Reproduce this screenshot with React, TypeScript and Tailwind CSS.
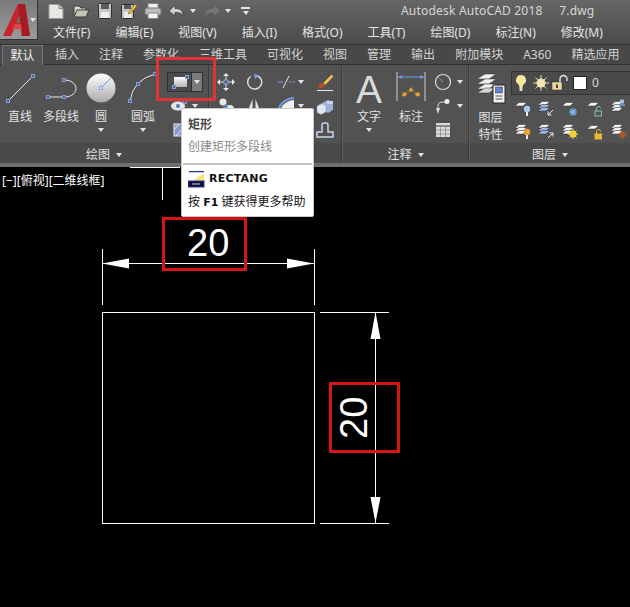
import type { ReactNode } from "react";

const Caret = ({ className = "" }: { className?: string }) => (
  <span className={`inline-block w-0 h-0 border-x-[3.5px] border-x-transparent border-t-[4px] border-t-[#e4e4e4] ${className}`} />
);

const Grip = ({ x, y }: { x: number; y: number }) => (
  <rect x={x - 1.5} y={y - 1.5} width="3" height="3" fill="#59606e" stroke="#7d9fe6" strokeWidth="1" />
);

const Ico = ({ w = 18, h = 18, children }: { w?: number; h?: number; children: ReactNode }) => (
  <svg width={w} height={h} viewBox={`0 0 ${w} ${h}`} className="block shrink-0">
    {children}
  </svg>
);

// ---- quick access icons
const QNew = () => (
  <Ico>
    <path d="M2 2.500h10l4 4v10H2z" fill="#e8e8e2" stroke="#999" />
    <path d="M12 2.500v4h4" fill="#bbb" stroke="#888" />
  </Ico>
);
const QOpen = () => (
  <Ico>
    <path d="M2 14V4h5l2 2h5v2" fill="#d8d4c4" stroke="#3c3c3c" />
    <path d="M2 15l3-7h12l-3 7z" fill="#c4c4b8" stroke="#3c3c3c" />
  </Ico>
);
const QSave = () => (
  <Ico>
    <rect x="2.500" y="1.500" width="13" height="15" rx="1" fill="#c6c6c6" stroke="#2e2e2e" />
    <rect x="5" y="2" width="8" height="5" fill="#5b5b5b" />
    <rect x="5" y="10" width="8" height="6" fill="#eee" />
  </Ico>
);
const QSaveAs = () => (
  <Ico>
    <rect x="1.500" y="2.500" width="12" height="14" rx="1" fill="#c6c6c6" stroke="#2e2e2e" />
    <rect x="4" y="3" width="7" height="4" fill="#5b5b5b" />
    <rect x="4" y="10" width="7" height="6" fill="#eee" />
    <path d="M9 10l6-8 2 2-6 7-3 1z" fill="#f0c040" stroke="#8a6a20" strokeWidth=".7" />
  </Ico>
);
const QPrint = () => (
  <Ico>
    <rect x="4" y="1.500" width="10" height="5" fill="#eee" stroke="#888" />
    <rect x="1" y="6" width="16" height="7" rx="2" fill="#bdbdbd" stroke="#777" />
    <rect x="4" y="11" width="10" height="5.500" fill="#f2f2f2" stroke="#888" />
  </Ico>
);
const QUndo = () => (
  <Ico w={16}>
    <path d="M1 9l6-6v3.500c4 0 8 1 8 7.500-1.500-3-4-3.500-8-3.500V14z" fill="#cfcfcf" stroke="#333" strokeWidth=".7" />
  </Ico>
);
const QRedo = () => (
  <Ico w={16}>
    <path d="M15 9l-6-6v3.500c-4 0-8 1-8 7.500 1.500-3 4-3.500 8-3.500V14z" fill="#777" stroke="#666" strokeWidth=".7" />
  </Ico>
);
const QMenu = () => (
  <span className="flex flex-col items-center gap-[2px]">
    <span className="w-[9px] h-[2px] bg-[#e4e4e4]" />
    <Caret />
  </span>
);

// ---- big tools in the draw panel
const LineIcon = () => (
  <Ico w={40} h={36}>
    <path d="M8 29L33 4" stroke="#e8e8e8" strokeWidth="1" />
    <Grip x={8} y={29} />
    <Grip x={33} y={4} />
  </Ico>
);
const PolylineIcon = () => (
  <Ico w={42} h={36}>
    <path d="M8 25H24C40 25 40 8 24 8" fill="none" stroke="#e8e8e8" strokeWidth="1" />
    <Grip x={8} y={25} />
    <Grip x={24} y={25} />
    <Grip x={24} y={8} />
  </Ico>
);
const CircleIcon = () => (
  <Ico w={38} h={36}>
    <defs>
      <linearGradient id="circ" x1="0" y1="0" x2="0" y2="1">
        <stop offset="0" stopColor="#ffffff" />
        <stop offset="1" stopColor="#a9a9a9" />
      </linearGradient>
    </defs>
    <circle cx="19" cy="16" r="14.500" fill="url(#circ)" />
    <path d="M19 16L29 6" stroke="#6f98e8" strokeWidth="1" />
    <rect x="17.500" y="14.500" width="3" height="3" fill="#e4e8f0" stroke="#7d9fe6" />
  </Ico>
);
const ArcIcon = () => (
  <Ico w={46} h={36}>
    <path d="M10 29Q13 8 35 2" fill="none" stroke="#e8e8e8" strokeWidth="1" />
    <Grip x={10} y={29} />
    <Grip x={18} y={12} />
    <Grip x={35} y={2} />
  </Ico>
);

const BigTool = ({ w, label, caret, children }: { w: string; label: string; caret?: boolean; children: ReactNode }) => (
  <div className={`flex flex-col items-center ${w}`}>
    <div className="h-[37px] flex justify-center">{children}</div>
    <span className="text-[12px] leading-[16px] text-[#e2e2e2] whitespace-nowrap">{label}</span>
    {caret && <Caret className="mt-[3px]" />}
  </div>
);

const Panel = ({ w, title, children }: { w: string; title?: string; children: ReactNode }) => (
  <div className={`${w} h-full flex flex-col border-r border-r-[#3b3b3b] border-l border-l-[#5e5e5e] first:border-l-0 last:border-r-0`}>
    <div className="h-[78px] flex overflow-hidden">{children}</div>
    <div className="h-[20px] pt-[3px] bg-[#4a4a4a] flex items-center justify-center gap-[6px] text-[12px] text-[#e2e2e2]">
      {title && (
        <>
          <span>{title}</span>
          <Caret />
        </>
      )}
    </div>
  </div>
);

// ---- small tools
const RectSplit = () => (
  <div className="flex h-[20px] w-[36px] border border-[#303030] bg-[#4c4c4c] mt-[2px]">
    <div className="w-[24px] flex items-center justify-center border-r border-r-[#303030]">
      <Ico w={18} h={14}>
        <defs>
          <linearGradient id="rectg" x1="0" y1="0" x2="0" y2="1">
            <stop offset="0" stopColor="#fbfbfb" />
            <stop offset="1" stopColor="#b4b4b4" />
          </linearGradient>
        </defs>
        <rect x="3" y="2" width="13" height="10" fill="url(#rectg)" />
        <Grip x={3} y={12} />
        <Grip x={16} y={2} />
      </Ico>
    </div>
    <div className="flex-1 bg-[#7a7a7a] flex items-center justify-center">
      <Caret />
    </div>
  </div>
);
const EllipseIcon = () => (
  <Ico w={16} h={12}>
    <ellipse cx="7" cy="6" rx="7" ry="4.500" fill="#e6e6e6" />
    <Grip x={7} y={6} />
    <Grip x={14} y={2} />
  </Ico>
);
const HatchIcon = () => (
  <Ico w={14} h={16}>
    <rect x="2" y="2" width="9" height="12" fill="#8b9ad0" stroke="#e8e8e8" />
    <path d="M2 8l5-6M4 14l7-8" stroke="#dfe4f5" />
  </Ico>
);
const MoveIcon = () => (
  <Ico>
    <path d="M9 0l3 3H6zM9 18l3-3H6zM0 9l3-3v6zM18 9l-3-3v6z" fill="#e8e8e8" />
    <path d="M3 9h12M9 3v12" stroke="#e8e8e8" />
    <rect x="7" y="7" width="4" height="4" fill="#59606e" stroke="#7d9fe6" />
  </Ico>
);
const RotateIcon = () => (
  <Ico>
    <path d="M5.500 3.500A7 7 0 1 0 12 2.500" fill="none" stroke="#dcdcdc" strokeWidth="1.500" />
    <path d="M9 .5l5 2.500-4 3z" fill="#7d9fe6" />
  </Ico>
);
const TrimIcon = () => (
  <Ico>
    <path d="M1 9h5M12 9h2M15.500 9h2" stroke="#7d9fe6" />
    <path d="M6 15L12 3" stroke="#e4e4e4" />
  </Ico>
);
const BrushIcon = () => (
  <Ico>
    <path d="M7 10L15.500 1.500l2 2L9.500 12z" fill="#f0c45a" stroke="#6a5020" strokeWidth=".5" />
    <path d="M2 14.500c1-3.500 3-5 5-4.500l2.500 2c-1 2.500-4 3.500-7.500 2.500z" fill="#b5532a" />
    <path d="M1 17.500h16" stroke="#e8e8e8" />
  </Ico>
);
const CopyIcon = () => (
  <Ico>
    <circle cx="6" cy="5" r="3.500" fill="#e8e8e8" />
    <circle cx="13" cy="12" r="4" fill="#e8e8e8" />
    <rect x="7" y="8" width="3" height="3" fill="#59606e" stroke="#7d9fe6" />
  </Ico>
);
const MirrorIcon = () => (
  <Ico>
    <path d="M7.500 2v14H2zM10.500 2v14H16z" fill="#e6e6e6" />
  </Ico>
);
const FilletIcon = () => (
  <Ico>
    <path d="M3 17C3 9 8 4 17 3v14z" fill="#f2f2f2" />
    <path d="M1 17C1 8 7 2 17 1" fill="none" stroke="#6f98e8" strokeWidth="2" />
  </Ico>
);
const ArrayIcon = () => (
  <Ico>
    <path d="M6 6l6-3 5 2v8l-5 3-6-3z" fill="#9cb3d8" />
    <path d="M1 9l5-2.500 4 2V15l-5 2.500-4-2z" fill="#dfe6f2" stroke="#7f93b8" strokeWidth=".5" />
    <path d="M11 4h6v3h-6z" fill="#c8d4ea" />
  </Ico>
);
const StretchIcon = () => (
  <Ico>
    <path d="M1 16v-5h5V4q0-2 2-2h2q2 0 2 2v7h5v5z" fill="none" stroke="#c6d6f0" strokeWidth="1.500" />
  </Ico>
);

// ---- annotation
const DimIcon = () => (
  <Ico w={30} h={30}>
    <path d="M1 0v29M29 0v29" stroke="#cfcfcf" />
    <path d="M2 5h26" stroke="#6f98e8" />
    <path d="M2 5l4-2v4zM28 5l-4-2v4z" fill="#6f98e8" />
    <path d="M15 15l2.500 3.500-2.500 1.500-2.500-1.500zM7 20l4 1-1 3.500-4-.5zM23 20l-4 1 1 3.500 4-.5z" fill="#d9a032" />
    <path d="M11 18l2 2-1.500 1zM19 18l-2 2 1.500 1z" fill="#a8661e" />
  </Ico>
);
const CircleSmall = () => (
  <Ico>
    <circle cx="9" cy="9" r="7.500" fill="none" stroke="#dcdcdc" strokeWidth="1.200" />
    <path d="M9 9L4 4" stroke="#6f98e8" />
  </Ico>
);
const LeaderIcon = () => (
  <Ico>
    <path d="M4 12V8q1-3 4-3h4" fill="none" stroke="#dcdcdc" />
    <path d="M4 17L2 11h4z" fill="#dcdcdc" />
    <circle cx="13" cy="4.500" r="2.500" fill="#efefef" />
  </Ico>
);
const TableIcon = () => (
  <Ico>
    <rect x="2" y="2" width="14" height="14" fill="#dcdcdc" />
    <path d="M2 5h14" stroke="#8a8a8a" strokeWidth="2" />
    <path d="M2 9h14M2 13h14M6.500 5v11M11.500 5v11" stroke="#8a8a8a" strokeWidth=".8" />
  </Ico>
);

// ---- layers
const LayerProps = () => (
  <Ico w={30} h={32}>
    <path d="M1 7l8-5h11l-7 5z" fill="#f2f2f2" stroke="#333" strokeWidth=".5" />
    <path d="M1 12l8-5h11l-7 5z" fill="#f2f2f2" stroke="#333" strokeWidth=".5" />
    <path d="M1 17l8-5h11l-7 5z" fill="#f2f2f2" stroke="#333" strokeWidth=".5" />
    <path d="M1 21l8-5h11l-7 5z" fill="#d4d4d4" stroke="#333" strokeWidth=".5" />
    <rect x="17" y="13" width="12" height="18" fill="#f4f4f4" stroke="#222" />
    <rect x="19.500" y="15" width="7" height="6" fill="#5f86c8" stroke="#333" strokeWidth=".5" />
    <path d="M19.500 24h7M19.500 27h7" stroke="#444" />
  </Ico>
);

const Sheet = ({ n, blue }: { n: number; blue?: boolean }) => (
  <>
    {Array.from({ length: n }).map((_, i) => (
      <path
        key={i}
        d={`M1 ${6 + i * 3}l4-3.500h8l-4 3.500z`}
        fill={blue && i > 0 ? "#9db8e4" : "#f4f4f4"}
        stroke="#2c2c2c"
        strokeWidth=".5"
      />
    ))}
  </>
);

type Acc = "bulbBlue" | "bulb" | "arrowDown" | "arrowUp" | "snow" | "sun" | "lockG" | "lockY" | "person" | "brush";

const Accessory = ({ k }: { k: Acc }) => {
  if (k === "bulbBlue" || k === "bulb")
    return (
      <>
        <circle cx="13" cy="10" r="3.200" fill={k === "bulb" ? "#f2a030" : "#a9c8f0"} />
        <rect x="12" y="13" width="2" height="4" fill="#eee" />
      </>
    );
  if (k === "arrowDown") return <path d="M16 11l-5 5M11 12.500V16h3.500" fill="none" stroke="#eee" />;
  if (k === "arrowUp") return <path d="M11 16l5-5M12.500 11H16v3.500" fill="none" stroke="#eee" />;
  if (k === "snow")
    return <path d="M8 13h8M12 9v8M9 10l6 6M15 10l-6 6" stroke="#7fb0f0" strokeWidth="1.300" />;
  if (k === "sun")
    return (
      <>
        <path d="M7 12h10M12 7v10M8.500 8.500l7 7M15.500 8.500l-7 7" stroke="#f6e070" />
        <circle cx="12" cy="12" r="3.500" fill="#f6d030" />
      </>
    );
  if (k === "lockG" || k === "lockY") {
    const c = k === "lockG" ? "#86c4a8" : "#e8b838";
    return (
      <>
        <path d="M10.500 12v-2.500a2 2 0 0 1 4 0" fill="none" stroke={c} />
        <rect x="9" y="12" width="6.500" height="5" fill={k === "lockG" ? "none" : c} stroke={c} />
      </>
    );
  }
  if (k === "person")
    return (
      <>
        <circle cx="12" cy="2.500" r="2.300" fill="#a9c0e8" />
        <path d="M9 5h6v2H9z" fill="#6f8fc8" />
      </>
    );
  return <path d="M9 12l3-3 5 3-3 4-4 0z" fill="#a85a20" />;
};

const LayerTool = ({ n, blue, a }: { n: number; blue?: boolean; a: Acc }) => (
  <div className="flex justify-center">
    <Ico>
      <g transform={n === 1 ? "translate(0 1)" : "translate(0 0)"}>
        <Sheet n={n} blue={blue} />
      </g>
      <Accessory k={a} />
    </Ico>
  </div>
);

const Bulb = () => (
  <Ico w={12} h={18}>
    <path d="M6 1a5 5 0 0 0-3 9c1 1 1.500 2 1.500 4h3c0-2 .5-3 1.500-4a5 5 0 0 0-3-9z" fill="#f6e8a0" />
    <rect x="4.500" y="14" width="3" height="3" fill="#d8d8d8" />
  </Ico>
);
const SunIcon = () => (
  <Ico>
    <path d="M1 9h16M9 1v16M3.500 3.500l11 11M14.500 3.500l-11 11" stroke="#e8dca8" />
    <circle cx="9" cy="9" r="4.500" fill="#f2e6b0" />
  </Ico>
);
const LockOpen = () => (
  <Ico w={20}>
    <rect x="2" y="8" width="10" height="8" fill="#ecd898" stroke="#333" strokeWidth=".5" />
    <rect x="6" y="10.500" width="2" height="3.500" fill="#444" />
    <path d="M10 8V5a3.500 3.500 0 0 1 7 0v2" fill="none" stroke="#e8e8e8" strokeWidth="1.300" />
  </Ico>
);

const AutoCadLogo = () => (
  <svg width="30" height="34" viewBox="0 0 30 34" className="block">
    <path d="M1 33L16 1h7l5 32h-8l-1-7h-7l-3 7z" fill="#c9232b" />
    <path d="M14 20h5l-1-9z" fill="#6b6b6b" />
    <path d="M16 1h7l5 32h-8L16 1z" fill="#a51c24" />
    <path d="M10 26l3-5h6l.8 5z" fill="#e04048" />
  </svg>
);

const RectangIcon = () => (
  <svg width="17" height="17" viewBox="0 0 17 17" className="block">
    <path d="M1 .5h15" stroke="#2030a0" strokeWidth="1.500" />
    <path d="M16 2v9H3z" fill="#f4e878" />
    <rect x="0" y="10" width="16" height="6" fill="#101020" stroke="#2030c0" />
    <path d="M4 13h8" stroke="#d8d8d8" />
  </svg>
);

const MENU = ["文件(F)", "编辑(E)", "视图(V)", "插入(I)", "格式(O)", "工具(T)", "绘图(D)", "标注(N)", "修改(M)"];
const TABS = ["插入", "注释", "参数化", "三维工具", "可视化", "视图", "管理", "输出", "附加模块", "A360", "精选应用"];

export default function App() {
  return (
    <div className="relative w-[630px] h-[607px] overflow-hidden bg-black font-['Noto_Sans','Noto_Sans_CJK_SC',sans-serif] flex flex-col">
      {/* title + menu */}
      <header className="h-[45px] shrink-0 flex bg-gradient-to-b from-[#666666] to-[#4b4b4b] border-b border-b-[#2f2f2f]">
        <div className="w-[38px] h-[40px] flex items-center pl-[2px] gap-[1px] bg-gradient-to-b from-[#7b7b7b] to-[#9a9a9a] border-r border-b border-[#333333]">
          <AutoCadLogo />
          <Caret className="border-t-[#333333] -ml-[3px]" />
        </div>
        <div className="flex-1 flex flex-col">
          <div className="h-[24px] flex items-center text-[#d6d6d6]">
            <div className="ml-[9px] w-[25px]"><QNew /></div>
            <div className="w-[24px]"><QOpen /></div>
            <div className="w-[24px]"><QSave /></div>
            <div className="w-[24px]"><QSaveAs /></div>
            <div className="w-[24px]"><QPrint /></div>
            <div className="w-[21px]"><QUndo /></div>
            <Caret className="ml-[1px] mr-[9px]" />
            <div className="w-[20px]"><QRedo /></div>
            <Caret className="border-t-[#9a9a9a] mr-[10px]" />
            <QMenu />
            <span className="ml-[151px] text-[12px] tracking-[.2px] whitespace-pre">Autodesk AutoCAD 2018     7.dwg</span>
          </div>
          <nav className="flex gap-[25px] pl-[15px] text-[12px] leading-[22px] text-[#e4e4e4] whitespace-nowrap">
            {MENU.map((m) => (
              <span key={m}>{m}</span>
            ))}
          </nav>
        </div>
      </header>

      {/* tabs */}
      <div className="h-[20px] shrink-0 flex items-end bg-[#484848] border-b border-b-[#2f2f2f] text-[12px] text-[#d2d2d2] whitespace-nowrap">
        <span className="ml-[2px] w-[41px] h-[20px] pt-[1px] -mb-[1px] flex items-center justify-center bg-[#535353] border border-[#787878] border-b-0 text-[#f0f0f0]">默认</span>
        <div className="flex gap-[20px] pl-[12px] pt-[1px] h-full items-center">
          {TABS.map((t) => (
            <span key={t}>{t}</span>
          ))}
        </div>
      </div>

      {/* ribbon */}
      <div className="h-[98px] shrink-0 flex bg-[#525252]">
        <Panel w="w-[209px]" title="绘图">
          <div className="flex pt-[7px]">
            <BigTool w="w-[40px]" label="直线"><LineIcon /></BigTool>
            <BigTool w="w-[42px]" label="多段线"><PolylineIcon /></BigTool>
            <BigTool w="w-[38px]" label="圆" caret><CircleIcon /></BigTool>
            <BigTool w="w-[46px]" label="圆弧" caret><ArcIcon /></BigTool>
          </div>
          <div className="flex flex-col pt-[5px] pl-[1px]">
            <div className="h-[24px]"><RectSplit /></div>
            <div className="h-[24px] flex items-center gap-[5px] pl-[4px]"><EllipseIcon /><Caret /></div>
            <div className="h-[24px] flex items-center pl-[5px]"><HatchIcon /></div>
          </div>
        </Panel>
        <Panel w="w-[133px]">
          <div className="grid grid-cols-[26px_30px_40px_32px] grid-rows-[24px_24px_24px] items-center justify-items-center pl-[3px] pt-[5px]">
            <MoveIcon />
            <RotateIcon />
            <div className="flex items-center gap-[3px] justify-self-start pl-[8px]"><TrimIcon /><Caret /></div>
            <BrushIcon />
            <CopyIcon />
            <MirrorIcon />
            <div className="flex items-center gap-[3px] justify-self-start pl-[8px]"><FilletIcon /><Caret /></div>
            <ArrayIcon />
            <span />
            <span />
            <span />
            <StretchIcon />
          </div>
        </Panel>
        <Panel w="w-[127px]" title="注释">
          <div className="flex pt-[7px]">
            <div className="w-[52px] flex flex-col items-center">
              <div className="h-[37px] flex items-start justify-center text-[39px] leading-[35px] font-['Liberation_Sans',sans-serif] text-[#dadada]">A</div>
              <span className="text-[12px] leading-[16px] text-[#e2e2e2]">文字</span>
              <Caret className="mt-[3px]" />
            </div>
            <BigTool w="w-[32px]" label="标注"><DimIcon /></BigTool>
          </div>
          <div className="grid grid-cols-[18px_12px] grid-rows-[24px_24px_24px] items-center justify-items-center pl-[7px] pt-[5px] gap-x-[2px]">
            <CircleSmall />
            <Caret />
            <LeaderIcon />
            <Caret />
            <TableIcon />
          </div>
        </Panel>
        <Panel w="w-[161px]" title="图层">
          <div className="w-[41px] flex flex-col items-center pt-[7px]">
            <div className="h-[37px]"><LayerProps /></div>
            <span className="text-[12px] leading-[17px] text-[#e2e2e2]">图层</span>
            <span className="text-[12px] leading-[17px] text-[#e2e2e2]">特性</span>
          </div>
          <div className="flex-1 flex flex-col pt-[6px]">
            <div className="h-[24px] flex items-center pl-[3px] bg-[#4a4a4a] border border-[#333333] border-r-0">
              <Bulb />
              <span className="ml-[5px]"><SunIcon /></span>
              <LockOpen />
              <span className="ml-[3px] w-[14px] h-[14px] bg-white border border-[#222222]" />
              <span className="ml-[5px] text-[12px] text-[#d8d8d8]">0</span>
            </div>
            <div className="grid grid-cols-[23px_23px_25px_25px_23px] grid-rows-[23px_23px] items-center pt-[1px]">
              <LayerTool n={1} a="bulbBlue" />
              <LayerTool n={3} blue a="arrowDown" />
              <LayerTool n={1} a="snow" />
              <LayerTool n={1} a="lockG" />
              <LayerTool n={3} a="person" />
              <LayerTool n={3} a="bulb" />
              <LayerTool n={3} blue a="arrowUp" />
              <LayerTool n={3} a="sun" />
              <LayerTool n={1} a="lockY" />
              <LayerTool n={3} a="brush" />
            </div>
          </div>
        </Panel>
      </div>
      <div className="h-[4px] shrink-0 bg-[#6e6e6e]" />

      {/* drawing area */}
      <main className="relative flex-1 bg-black">
        <svg width="630" height="440" viewBox="0 167 630 440" className="absolute inset-0">
          <g stroke="#ffffff" strokeWidth="1" shapeRendering="crispEdges" fill="none">
            <path d="M130 167.500H180M162.500 167V200" />
            <path d="M102.500 249V305M314.500 249V305" />
            <path d="M102 263.500H314" />
            <rect x="102.500" y="312.500" width="212" height="211" />
            <path d="M320 312.500H389M320 523.500H389" />
            <path d="M375.500 312V523" />
          </g>
          <g fill="#ffffff">
            <path d="M102 263.500L129 258.500V268.500z" />
            <path d="M314 263.500L287 258.500V268.500z" />
            <path d="M375.500 312L370.500 339H380.500z" />
            <path d="M375.500 523L370.500 497H380.500z" />
          </g>
        </svg>
        <span className="absolute left-[2px] top-[6px] text-[12px] leading-[16px] text-white whitespace-nowrap">[−][俯视][二维线框]</span>
        <span className="absolute left-[187px] top-[52px] text-[38px] leading-[48px] font-['Liberation_Sans',sans-serif] text-white">20</span>
        <span className="absolute left-[333px] top-[227px] w-[42px] text-center text-[38px] leading-[48px] font-['Liberation_Sans',sans-serif] text-white -rotate-90">20</span>
        {/* red callouts */}
        <div className="absolute left-[162px] top-[50px] w-[85px] h-[54px] border-[3px] border-[#d81414]" />
        <div className="absolute left-[329px] top-[215px] w-[71px] h-[71px] border-[3px] border-[#d81414]" />
      </main>

      <div className="absolute left-[156px] top-[57px] w-[60px] h-[44px] border-[3px] border-[#e03535]" />

      {/* tooltip */}
      <div className="absolute left-[181px] top-[108px] w-[133px] h-[109px] bg-white rounded-[2px] border border-[#c8c8c8] shadow-sm flex flex-col text-[12px]">
        <div className="pl-[6px] pt-[7px] leading-[18px] font-bold text-[#444444]">矩形</div>
        <div className="pl-[6px] pt-[4px] leading-[18px] text-[#8a8a8a]">创建矩形多段线</div>
        <div className="mx-[1px] mt-[7px] h-[2px] bg-[#c4c4c4]" />
        <div className="pl-[6px] pt-[6px] flex items-center gap-[4px]">
          <RectangIcon />
          <span className="font-['DejaVu_Sans',sans-serif] text-[11px] font-bold text-[#111111] tracking-[.2px]">RECTANG</span>
        </div>
        <div className="pl-[6px] pt-[5px] leading-[18px] text-[#111111] whitespace-nowrap">
          按 <b className="font-['DejaVu_Sans',sans-serif] text-[11px]">F1</b> 键获得更多帮助
        </div>
      </div>
    </div>
  );
}
